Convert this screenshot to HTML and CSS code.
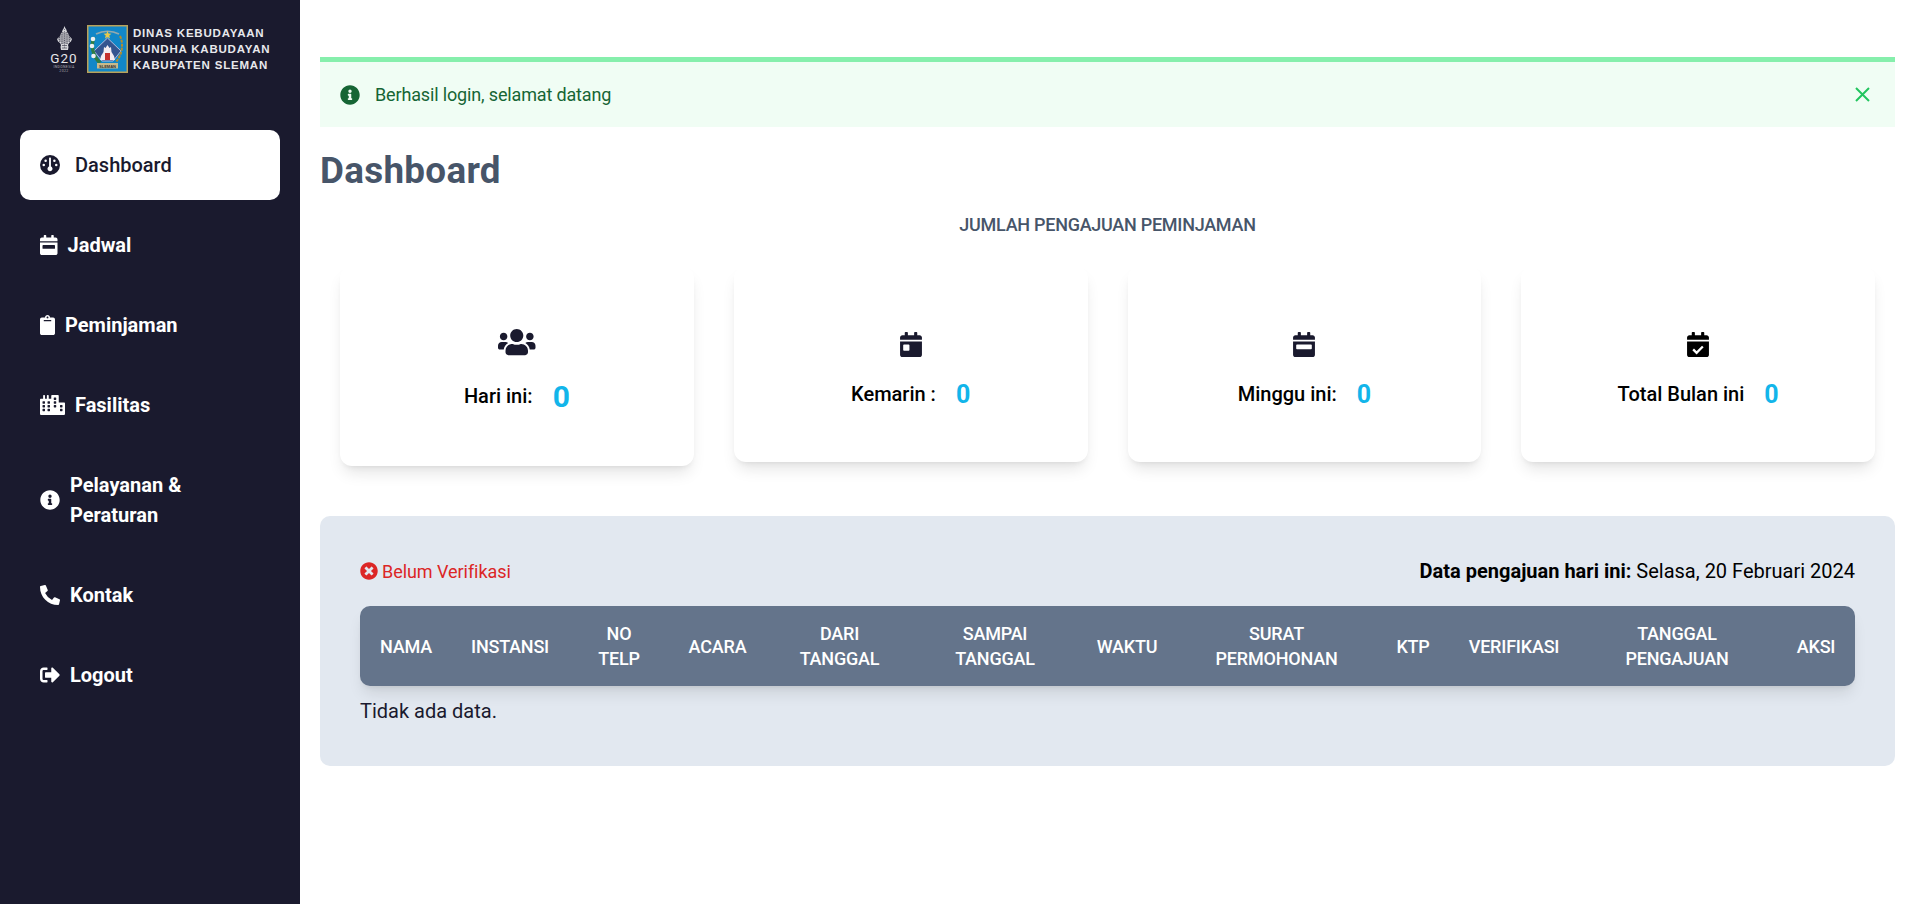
FILE: index.html
```html
<!DOCTYPE html>
<html lang="id">
<head>
<meta charset="utf-8">
<title>Dashboard</title>
<link rel="stylesheet" href="styles.css">
</head>
<body>
<div class="app">
  <aside class="sidebar">
    <div class="brand">
      <div class="g20">
        <svg class="g20-mark" viewBox="0 0 15 24" aria-hidden="true">
          <path class="g20-fill" d="M7.500 0l.8 2 1 1.500.6 2 1.300 2 1 2.500L15 13l-1 2.500-2 1.500-1 2 .5 2-.5 3H4l-.5-3 .5-2-1-2-2-1.500-1-2.500 2.700-2.500 1-2.500 1.300-2 .6-2 1-1.500z"/>
          <path class="g20-cut" d="M4.500 7h6M3 9h9M2 11h11M1 13h13M2 15h11M4 17h7M5 19.500h5M5 22h5"/>
          <path class="g20-cut2" d="M7.500 3v19M5 6v12M10 6v12M2.500 11v5M12.500 11v5"/>
        </svg>
        <span class="g20-name">G20</span>
        <span class="g20-sub">INDONESIA</span>
        <span class="g20-sub">2022</span>
      </div>
      <svg class="emblem" viewBox="0 0 41 48" aria-hidden="true">
        <rect x="0.750" y="0.750" width="39.500" height="46.500" fill="#1187c8" stroke="#b9a25a" stroke-width="1.500"/>
        <path d="M9 9c7-3.500 16-3.500 23 0" fill="none" stroke="#93a9ad" stroke-width="1.800"/>
        <path d="M20.500 6l1.100 2.600 2.800.2-2.100 1.800.7 2.800-2.500-1.500-2.500 1.500.7-2.800-2.100-1.800 2.800-.2z" fill="#e9c84a"/>
        <path d="M20.500 13L34 26l-8 10H15L7 26z" fill="#34558f" stroke="#d8cfe8" stroke-width=".8"/>
        <path d="M20.500 20l2 3 1.500-1 .5 5 2.500 4 1 4h-15l1-4 2.500-4 .5-5 1.500 1z" fill="#f3edf0"/>
        <rect x="18" y="28" width="5" height="7" fill="#c4302c"/>
        <path d="M7 12c-3 8-2 18 6 26" fill="none" stroke="#2e7d45" stroke-width="3.500"/>
        <path d="M33 11c4 8 2 19-4 26" fill="none" stroke="#b38d2c" stroke-width="2" stroke-dasharray="3 1"/>
        <circle cx="6" cy="14" r="2.300" fill="#eef0f2"/><circle cx="5" cy="21" r="2.300" fill="#eef0f2"/><circle cx="6.500" cy="31" r="2.300" fill="#eef0f2"/>
        <rect x="10" y="38" width="21" height="5.500" fill="#c9b98a"/>
        <text class="emblem-text" x="20.500" y="42.500">SLEMAN</text>
      </svg>
      <div class="brand-text">
        <span>DINAS KEBUDAYAAN</span>
        <span>KUNDHA KABUDAYAN</span>
        <span>KABUPATEN SLEMAN</span>
      </div>
    </div>
    <nav class="nav">
      <a class="nav-item active">
        <svg class="ic gap-15" viewBox="0 0 512 512"><path d="M0 256a256 256 0 1 1 512 0A256 256 0 1 1 0 256zm320 96c0-26.900-16.500-49.900-40-59.300V88c0-13.300-10.700-24-24-24s-24 10.700-24 24V292.700c-23.500 9.500-40 32.500-40 59.300c0 35.300 28.700 64 64 64s64-28.700 64-64zM144 176a32 32 0 1 0 0-64 32 32 0 1 0 0 64zm-16 80a32 32 0 1 0 -64 0 32 32 0 1 0 64 0zm288 32a32 32 0 1 0 0-64 32 32 0 1 0 0 64zM400 144a32 32 0 1 0 -64 0 32 32 0 1 0 64 0z"/></svg>
        <span>Dashboard</span>
      </a>
      <a class="nav-item">
        <svg class="ic ic-cal gap-10" viewBox="0 0 448 512"><path d="M0 464c0 26.500 21.500 48 48 48h352c26.500 0 48-21.500 48-48V192H0v272zm64-192c0-8.800 7.200-16 16-16h288c8.800 0 16 7.200 16 16v64c0 8.800-7.200 16-16 16H80c-8.800 0-16-7.200-16-16v-64zM400 64h-48V16c0-8.800-7.200-16-16-16h-32c-8.800 0-16 7.200-16 16v48H160V16c0-8.800-7.200-16-16-16h-32c-8.800 0-16 7.200-16 16v48H48C21.500 64 0 85.500 0 112v48h448v-48c0-26.500-21.500-48-48-48z"/></svg>
        <span>Jadwal</span>
      </a>
      <a class="nav-item">
        <svg class="ic ic-clip gap-10" viewBox="0 0 384 512"><path d="M384 112v352c0 26.510-21.490 48-48 48H48c-26.510 0-48-21.490-48-48V112c0-26.510 21.490-48 48-48h80c0-35.290 28.710-64 64-64s64 28.710 64 64h80c26.510 0 48 21.490 48 48zM192 40c-13.255 0-24 10.745-24 24s10.745 24 24 24 24-10.745 24-24-10.745-24-24-24m96 114v-20a6 6 0 0 0-6-6H102a6 6 0 0 0-6 6v20a6 6 0 0 0 6 6h180a6 6 0 0 0 6-6z"/></svg>
        <span>Peminjaman</span>
      </a>
      <a class="nav-item">
        <svg class="ic ic-city gap-10" viewBox="0 0 640 512"><path d="M616 192H480V24c0-13.260-10.740-24-24-24H312c-13.260 0-24 10.740-24 24v72h-64V16c0-8.840-7.160-16-16-16h-16c-8.840 0-16 7.160-16 16v80h-48V16c0-8.840-7.160-16-16-16H96c-8.840 0-16 7.160-16 16v80H24c-13.260 0-24 10.740-24 24v360c0 17.670 14.330 32 32 32h576c17.670 0 32-14.330 32-32V216c0-13.260-10.750-24-24-24zM128 404c0 6.630-5.370 12-12 12H76c-6.630 0-12-5.370-12-12v-40c0-6.630 5.370-12 12-12h40c6.630 0 12 5.370 12 12v40zm0-96c0 6.630-5.370 12-12 12H76c-6.630 0-12-5.370-12-12v-40c0-6.630 5.370-12 12-12h40c6.630 0 12 5.370 12 12v40zm0-96c0 6.630-5.370 12-12 12H76c-6.630 0-12-5.370-12-12v-40c0-6.630 5.370-12 12-12h40c6.630 0 12 5.370 12 12v40zm128 192c0 6.630-5.370 12-12 12h-40c-6.630 0-12-5.370-12-12v-40c0-6.630 5.370-12 12-12h40c6.630 0 12 5.370 12 12v40zm0-96c0 6.630-5.370 12-12 12h-40c-6.630 0-12-5.370-12-12v-40c0-6.630 5.370-12 12-12h40c6.630 0 12 5.370 12 12v40zm0-96c0 6.630-5.370 12-12 12h-40c-6.630 0-12-5.370-12-12v-40c0-6.630 5.370-12 12-12h40c6.630 0 12 5.370 12 12v40zm160 96c0 6.630-5.370 12-12 12h-40c-6.630 0-12-5.370-12-12v-40c0-6.630 5.370-12 12-12h40c6.630 0 12 5.370 12 12v40zm0-96c0 6.630-5.370 12-12 12h-40c-6.630 0-12-5.370-12-12v-40c0-6.630 5.370-12 12-12h40c6.630 0 12 5.370 12 12v40zm0-96c0 6.630-5.370 12-12 12h-40c-6.630 0-12-5.370-12-12V76c0-6.630 5.370-12 12-12h40c6.630 0 12 5.370 12 12v40zm160 288c0 6.630-5.370 12-12 12h-40c-6.630 0-12-5.370-12-12v-40c0-6.630 5.370-12 12-12h40c6.630 0 12 5.370 12 12v40zm0-96c0 6.630-5.370 12-12 12h-40c-6.630 0-12-5.370-12-12v-40c0-6.630 5.370-12 12-12h40c6.630 0 12 5.370 12 12v40z"/></svg>
        <span>Fasilitas</span>
      </a>
      <a class="nav-item">
        <svg class="ic gap-10" viewBox="0 0 512 512"><path d="M256 8C119.043 8 8 119.083 8 256c0 136.997 111.043 248 248 248s248-111.003 248-248C504 119.083 392.957 8 256 8zm0 110c23.196 0 42 18.804 42 42s-18.804 42-42 42-42-18.804-42-42 18.804-42 42-42zm56 254c0 6.627-5.373 12-12 12h-88c-6.627 0-12-5.373-12-12v-24c0-6.627 5.373-12 12-12h12v-64h-12c-6.627 0-12-5.373-12-12v-24c0-6.627 5.373-12 12-12h64c6.627 0 12 5.373 12 12v100h12c6.627 0 12 5.373 12 12v24z"/></svg>
        <span>Pelayanan &amp;<br>Peraturan</span>
      </a>
      <a class="nav-item">
        <svg class="ic gap-10" viewBox="0 0 512 512"><path d="M497.390 361.800l-112-48a24 24 0 0 0-28 6.900l-49.600 60.600A370.660 370.660 0 0 1 130.600 204.110l60.600-49.600a23.940 23.940 0 0 0 6.900-28l-48-112A24.160 24.160 0 0 0 122.600.610l-104 24A24 24 0 0 0 0 48c0 256.500 207.900 464 464 464a24 24 0 0 0 23.400-18.600l24-104a24.290 24.290 0 0 0-14.010-27.600z"/></svg>
        <span>Kontak</span>
      </a>
      <a class="nav-item">
        <svg class="ic gap-10" viewBox="0 0 512 512"><path d="M497 273L329 441c-15 15-41 4.500-41-17v-96H152c-13.300 0-24-10.700-24-24v-96c0-13.300 10.700-24 24-24h136V88c0-21.400 25.900-32 41-17l168 168c9.300 9.400 9.300 24.600 0 34zM192 436v-40c0-6.600-5.400-12-12-12H96c-17.700 0-32-14.300-32-32V160c0-17.700 14.300-32 32-32h84c6.600 0 12-5.400 12-12V76c0-6.600-5.400-12-12-12H96c-53 0-96 43-96 96v192c0 53 43 96 96 96h84c6.600 0 12-5.400 12-12z"/></svg>
        <span>Logout</span>
      </a>
    </nav>
  </aside>

  <main class="main">
    <div class="alert">
      <svg class="alert-icon" viewBox="0 0 512 512"><path d="M256 8C119.043 8 8 119.083 8 256c0 136.997 111.043 248 248 248s248-111.003 248-248C504 119.083 392.957 8 256 8zm0 110c23.196 0 42 18.804 42 42s-18.804 42-42 42-42-18.804-42-42 18.804-42 42-42zm56 254c0 6.627-5.373 12-12 12h-88c-6.627 0-12-5.373-12-12v-24c0-6.627 5.373-12 12-12h12v-64h-12c-6.627 0-12-5.373-12-12v-24c0-6.627 5.373-12 12-12h64c6.627 0 12 5.373 12 12v100h12c6.627 0 12 5.373 12 12v24z"/></svg>
      <span class="alert-text">Berhasil login, selamat datang</span>
      <svg class="alert-close" viewBox="0 0 15 15"><path d="M1 1l13 13M14 1L1 14"/></svg>
    </div>

    <h1 class="title">Dashboard</h1>
    <h2 class="subtitle">JUMLAH PENGAJUAN PEMINJAMAN</h2>

    <section class="cards">
      <div class="card card-lg">
        <svg class="card-ic-users" viewBox="0 0 640 512"><path d="M96 224c35.300 0 64-28.700 64-64s-28.700-64-64-64-64 28.700-64 64 28.700 64 64 64zm448 0c35.300 0 64-28.700 64-64s-28.700-64-64-64-64 28.700-64 64 28.700 64 64 64zm32 32h-64c-17.600 0-33.500 7.100-45.100 18.600 40.300 22.100 68.900 62 75.100 109.400h66c17.700 0 32-14.300 32-32v-32c0-35.300-28.700-64-64-64zm-256 0c61.900 0 112-50.100 112-112S381.900 32 320 32 208 82.100 208 144s50.100 112 112 112zm76.800 32h-8.300c-20.800 10-43.900 16-68.500 16s-47.600-6-68.500-16h-8.300C179.600 288 128 339.600 128 403.200V432c0 26.500 21.500 48 48 48h288c26.500 0 48-21.500 48-48v-28.800c0-63.600-51.600-115.200-115.200-115.200zm-223.700-13.400C161.500 263.100 145.600 256 128 256H64c-35.300 0-64 28.700-64 64v32c0 17.700 14.300 32 32 32h65.900c6.300-47.400 34.900-87.300 75.200-109.400z"/></svg>
        <div class="stat"><span class="stat-label">Hari ini:</span><span class="stat-num">0</span></div>
      </div>
      <div class="card">
        <svg class="card-ic" viewBox="0 0 448 512"><path d="M0 464c0 26.500 21.500 48 48 48h352c26.500 0 48-21.500 48-48V192H0v272zm64-192c0-8.800 7.200-16 16-16h96c8.800 0 16 7.200 16 16v96c0 8.800-7.200 16-16 16H80c-8.800 0-16-7.200-16-16v-96zM400 64h-48V16c0-8.800-7.200-16-16-16h-32c-8.800 0-16 7.200-16 16v48H160V16c0-8.800-7.200-16-16-16h-32c-8.800 0-16 7.200-16 16v48H48C21.500 64 0 85.500 0 112v48h448v-48c0-26.500-21.500-48-48-48z"/></svg>
        <div class="stat"><span class="stat-label">Kemarin :</span><span class="stat-num">0</span></div>
      </div>
      <div class="card">
        <svg class="card-ic" viewBox="0 0 448 512"><path d="M0 464c0 26.500 21.500 48 48 48h352c26.500 0 48-21.500 48-48V192H0v272zm64-192c0-8.800 7.200-16 16-16h288c8.800 0 16 7.200 16 16v64c0 8.800-7.200 16-16 16H80c-8.800 0-16-7.200-16-16v-64zM400 64h-48V16c0-8.800-7.200-16-16-16h-32c-8.800 0-16 7.200-16 16v48H160V16c0-8.800-7.200-16-16-16h-32c-8.800 0-16 7.200-16 16v48H48C21.500 64 0 85.500 0 112v48h448v-48c0-26.500-21.500-48-48-48z"/></svg>
        <div class="stat"><span class="stat-label">Minggu ini:</span><span class="stat-num">0</span></div>
      </div>
      <div class="card">
        <svg class="card-ic card-ic-black" viewBox="0 0 448 512"><path d="M0 464c0 26.500 21.500 48 48 48h352c26.500 0 48-21.500 48-48V192H0v272zM400 64h-48V16c0-8.800-7.200-16-16-16h-32c-8.800 0-16 7.200-16 16v48H160V16c0-8.800-7.200-16-16-16h-32c-8.800 0-16 7.200-16 16v48H48C21.500 64 0 85.500 0 112v48h448v-48c0-26.500-21.500-48-48-48z"/><path class="check" d="M125 355l70 70 128-128"/></svg>
        <div class="stat"><span class="stat-label">Total Bulan ini</span><span class="stat-num">0</span></div>
      </div>
    </section>

    <section class="panel">
      <div class="panel-head">
        <div class="status">
          <svg class="status-ic" viewBox="0 0 512 512"><path d="M256 8C119 8 8 119 8 256s111 248 248 248 248-111 248-248S393 8 256 8zm121.600 313.100c4.700 4.700 4.700 12.300 0 17L338 377.600c-4.700 4.700-12.300 4.700-17 0L256 312l-65.100 65.600c-4.700 4.700-12.300 4.700-17 0L134.400 338c-4.700-4.700-4.700-12.300 0-17l65.600-65-65.600-65.100c-4.700-4.700-4.700-12.300 0-17l39.600-39.600c4.700-4.700 12.300-4.700 17 0l65 65.700 65.100-65.600c4.700-4.700 12.300-4.700 17 0l39.600 39.600c4.700 4.700 4.700 12.300 0 17L312 256l65.600 65.100z"/></svg>
          <span>Belum Verifikasi</span>
        </div>
        <div class="today"><b>Data pengajuan hari ini:</b> Selasa, 20 Februari 2024</div>
      </div>
      <table class="table">
        <thead>
          <tr>
            <th>NAMA</th><th>INSTANSI</th><th>NO<br>TELP</th><th>ACARA</th>
            <th>DARI<br>TANGGAL</th><th>SAMPAI<br>TANGGAL</th><th>WAKTU</th>
            <th>SURAT<br>PERMOHONAN</th><th>KTP</th><th>VERIFIKASI</th>
            <th>TANGGAL<br>PENGAJUAN</th><th>AKSI</th>
          </tr>
        </thead>
      </table>
      <p class="empty">Tidak ada data.</p>
    </section>
  </main>
</div>
</body>
</html>
```

FILE: styles.css
```css
* { box-sizing: border-box; }
html, body { margin: 0; padding: 0; }
body {
  background: #fff;
  font-family: Roboto, "Liberation Sans", sans-serif;
  color: #000;
  height: 908px;
  overflow: hidden;
}
.app { display: flex; height: 904px; align-items: stretch; }

.sidebar { width: 300px; flex: none; background: #1a1a2e; color: #fff; padding: 0 20px; }
.brand { height: 130px; display: flex; align-items: flex-start; padding: 25px 0 0 30px; }
.g20 { width: 28px; margin-right: 9px; display: flex; flex-direction: column; align-items: center; color: #e6e6ea; padding-top: 1px; }
.g20-mark { width: 15px; height: 24px; margin-bottom: 3px; }
.g20-fill { fill: #d6d6da; }
.g20-cut { stroke: #1a1a2e; stroke-width: .55; fill: none; }
.g20-cut2 { stroke: #1a1a2e; stroke-width: .55; stroke-dasharray: 1 1.200; fill: none; }
.g20-name { font-size: 13.500px; line-height: 10px; font-weight: 400; letter-spacing: 1px; margin-bottom: 3px; }
.g20-sub { font-size: 3.500px; line-height: 3.500px; letter-spacing: .35px; color: #a9a9b0; }
.emblem { width: 41px; height: 48px; flex: none; margin-right: 5px; }
.emblem-text { font-family: "Liberation Sans", sans-serif; font-size: 4px; font-weight: 700; fill: #333; text-anchor: middle; }
.brand-text { display: flex; flex-direction: column; font-family: "Liberation Sans", Arial, sans-serif; font-weight: 700; font-size: 11.500px; line-height: 16px; letter-spacing: .8px; color: #e8e8ec; white-space: nowrap; }

.nav { display: flex; flex-direction: column; gap: 10px; }
.nav-item { display: flex; align-items: center; padding: 20px; font-size: 20px; line-height: 30px; font-weight: 700; color: #fff; border-radius: 10px; }
.nav-item.active { background: #fff; color: #1a1a2e; font-weight: 500; }
.ic { width: 20px; height: 20px; flex: none; fill: currentColor; }
.ic-cal { width: 17.500px; }
.ic-clip { width: 15px; }
.ic-city { width: 25px; }
.gap-15 { margin-right: 15px; }
.gap-10 { margin-right: 10px; }

.main { flex: 1; min-width: 0; padding: 57px 33px 0 20px; }
.alert { display: flex; align-items: center; height: 70px; background: #f0fdf4; border-top: 5px solid #86efac; padding: 0 25px 0 20px; color: #166534; font-size: 18px; line-height: 25px; }
.alert-icon { width: 20px; height: 20px; fill: currentColor; margin-right: 5px; flex: none; }
.alert-text { margin-left: 10px; flex: 1; letter-spacing: -.15px; }
.alert-close { width: 15px; height: 15px; fill: none; stroke: #22c55e; stroke-width: 2; }

.title { margin: 21px 0 0; font-size: 36.800px; line-height: 45px; font-weight: 700; letter-spacing: .3px; color: #475569; }
.subtitle { margin: 19px 0 0; text-align: center; font-size: 18px; line-height: 25px; font-weight: 500; letter-spacing: -.27px; color: #475569; }

.cards { display: grid; grid-template-columns: repeat(4, 1fr); gap: 40px; padding: 29px 20px 20px; align-items: start; }
.card { display: flex; flex-direction: column; align-items: center; background: #fff; border-radius: 12px; padding: 66px 20px 48px; box-shadow: 0 10px 15px -3px rgba(0,0,0,.1), 0 4px 6px -4px rgba(0,0,0,.1); }
.card-lg { padding: 61px 20px 50px; }
.card-ic { width: 22px; height: 25px; fill: #1a1a2e; }
.card-ic-black { fill: #000; }
.card-ic-users { width: 37.500px; height: 30px; fill: #1a1a2e; }
.check { fill: none; stroke: #fff; stroke-width: 48; }
.stat { display: flex; align-items: center; margin-top: 17px; height: 40px; }
.card-lg .stat { margin-top: 19px; }
.stat-label { font-size: 20px; font-weight: 500; }
.stat-num { margin-left: 20px; font-size: 25px; font-weight: 700; color: #12b5ea; }
.card-lg .stat-num { font-size: 30px; }

.panel { margin-top: 30px; background: #e2e8f0; border-radius: 10px; padding: 40px; height: 250px; }
.panel-head { display: flex; justify-content: space-between; align-items: center; height: 30px; margin-bottom: 20px; font-size: 20px; }
.status { display: flex; align-items: center; color: #dc2626; font-size: 18px; letter-spacing: -.05px; }
.status-ic { width: 18px; height: 18px; fill: currentColor; margin-right: 4px; }
.today b { font-weight: 700; }
.table { width: 1495px; table-layout: fixed; border-collapse: separate; border-spacing: 0; background: #64748b; color: #fff; border-radius: 10px; box-shadow: 0 10px 15px -3px rgba(0,0,0,.1), 0 4px 6px -4px rgba(0,0,0,.1); }
.table th { padding: 15px 0; font-size: 18px; line-height: 25px; font-weight: 500; letter-spacing: -.2px; text-align: center; }
.table th:nth-child(1) { width: 92px; }
.table th:nth-child(2) { width: 116px; }
.table th:nth-child(3) { width: 102px; }
.table th:nth-child(4) { width: 95px; }
.table th:nth-child(5) { width: 149px; }
.table th:nth-child(6) { width: 162px; }
.table th:nth-child(7) { width: 102px; }
.table th:nth-child(8) { width: 197px; }
.table th:nth-child(9) { width: 76px; }
.table th:nth-child(10) { width: 126px; }
.table th:nth-child(11) { width: 200px; }
.table th:nth-child(12) { width: 78px; }
.empty { margin: 10px 0 0; font-size: 20px; line-height: 30px; color: #1a1a2e; }
```
